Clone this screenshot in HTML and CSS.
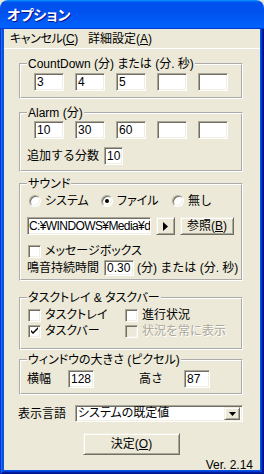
FILE: index.html
```html
<!DOCTYPE html>
<html lang="ja">
<head>
<meta charset="utf-8">
<link rel="stylesheet" href="styles.css">
</head>
<body>
<div class="window">
  <div class="titlebar"><span class="title">オプション</span></div>
  <div class="frame">
    <div class="menubar">
      <span class="menu m1">キャンセル(<u>C</u>)</span>
      <span class="menu m2">詳細設定(<u>A</u>)</span>
    </div>
    <div class="client">
      <fieldset class="group g1">
        <legend>CountDown (分) または (分. 秒)</legend>
        <div class="gbody b1">
          <div class="row fields">
            <div class="tb w30">3</div><div class="tb w30">4</div><div class="tb w30">5</div><div class="tb w30"></div><div class="tb w30"></div>
          </div>
        </div>
      </fieldset>

      <fieldset class="group g2">
        <legend>Alarm (分)</legend>
        <div class="gbody b2">
          <div class="row fields">
            <div class="tb w30">10</div><div class="tb w30">30</div><div class="tb w30">60</div><div class="tb w30"></div><div class="tb w30"></div>
          </div>
          <div class="row add">
            <span class="lbl l-add">追加する分数</span><div class="tb w19">10</div>
          </div>
        </div>
      </fieldset>

      <fieldset class="group g3">
        <legend>サウンド</legend>
        <div class="gbody b3">
          <div class="row radios">
            <span class="ritem r1"><span class="radio"></span><span class="kana">システム</span></span>
            <span class="ritem r2"><span class="radio on"></span><span class="kana">ファイル</span></span>
            <span class="ritem r3"><span class="radio"></span><span>無し</span></span>
          </div>
          <div class="row path">
            <div class="tb wpath">C:¥WINDOWS¥Media¥d</div>
            <div class="btn barrow"><svg width="5" height="9" viewBox="0 0 5 9"><polygon points="0,0 5,4.5 0,9" fill="#000"/></svg></div>
            <div class="btn bref">参照(<u>B</u>)</div>
          </div>
          <div class="row msg">
            <span class="cb"></span><span class="kana cbl">メッセージボックス</span>
          </div>
          <div class="row dur">
            <span class="lbl l-dur">鳴音持続時間</span><div class="tb w30 short">0.30</div><span class="after">(分) または (分. 秒)</span>
          </div>
        </div>
      </fieldset>

      <fieldset class="group g4">
        <legend>タスクトレイ &amp; タスクバー</legend>
        <div class="gbody b4">
          <div class="row chk">
            <span class="citem c1"><span class="cb"></span><span class="kana cbl">タスクトレイ</span></span>
            <span class="citem"><span class="cb"></span><span class="cbl">進行状況</span></span>
          </div>
          <div class="row chk chk2">
            <span class="citem c1"><span class="cb"><svg width="13" height="13" viewBox="0 0 13 13"><path d="M3 5v2l2 2 5-5V2L5 7z" fill="#000"/></svg></span><span class="kana cbl">タスクバー</span></span>
            <span class="citem"><span class="cb dis"></span><span class="cbl distext">状況を常に表示</span></span>
          </div>
        </div>
      </fieldset>

      <fieldset class="group g5">
        <legend>ウィンドウの大きさ (ピクセル)</legend>
        <div class="gbody b5">
          <div class="row size">
            <span class="lbl l-w">横幅</span><div class="tb w26">128</div>
            <span class="lbl l-h">高さ</span><div class="tb w26">87</div>
          </div>
        </div>
      </fieldset>

      <div class="row lang">
        <span class="lbl l-lang">表示言語</span>
        <div class="combo">
          <span class="ctext kana">システムの既定値</span>
          <div class="btn cdrop"><svg width="7" height="4" viewBox="0 0 7 4"><polygon points="0,0 7,0 3.5,4" fill="#000"/></svg></div>
        </div>
      </div>

      <div class="row okrow">
        <div class="btn bok">決定(<u>O</u>)</div>
      </div>

      <div class="ver">Ver. 2.14</div>
    </div>
  </div>
</div>
</body>
</html>
```
FILE: styles.css
```css
* { box-sizing: border-box; }
body {
  margin: 0;
  font-family: "Liberation Sans", "Noto Sans CJK JP", sans-serif;
  font-size: 12px;
  line-height: 14px;
  color: #000;
  background: #ECE9D8;
}
.window {
  width: 264px;
  height: 474px;
  display: flex;
  flex-direction: column;
  overflow: hidden;
}
.titlebar {
  height: 29px;
  flex: none;
  border-radius: 8px 8px 0 0;
  background: linear-gradient(180deg, #0997ff 0%, #0053ee 8%, #0050ee 40%, #0060fb 88%, #0066ff 93%, #005bff 95%, #003dd7 97%, #003dd7 100%);
  display: flex;
  align-items: center;
  padding-left: 7px;
}
.title {
  color: #fff;
  font-family: "Noto Sans CJK JP", sans-serif;
  font-weight: bold;
  font-size: 14px;
  line-height: 15px;
  text-shadow: 1px 1px #0f1089;
  font-feature-settings: "palt";
}
.frame {
  flex: 1;
  min-height: 0;
  display: flex;
  flex-direction: column;
  padding: 0 4px 4px;
  background: #0855dd;
  box-shadow: inset 1px 0 #0831d9, inset -1px 0 #00138c, inset 0 -1px #00138c,
              inset 2px 0 #166aee, inset -2px 0 #001ea0, inset 0 -2px #001ea0,
              inset 3px 0 #0855dd, inset -3px 0 #003bda, inset 0 -3px #003bda;
}
.menubar {
  height: 20px;
  flex: none;
  background: #ECE9D8;
  border-bottom: 1px solid #fff;
  display: flex;
  align-items: center;
}
.menu {
  line-height: 16px;
  font-feature-settings: "palt";
  white-space: nowrap;
}
.m1 { margin-left: 6px; width: 78px; letter-spacing: -0.4px; }
.kana { font-feature-settings: "palt"; }
.client {
  flex: 1;
  min-height: 0;
  background: #ECE9D8;
  display: flex;
  flex-direction: column;
  padding: 9px 17px 0 15px;
}
.group {
  margin: 0;
  padding: 0;
  min-width: 0;
  border: 2px groove #fff;
  flex: none;
}
.group legend {
  margin-left: 6px;
  padding: 0 1px;
  font-size: 12px;
  line-height: 12px;
  height: 12px;
  font-feature-settings: "palt";
}
.row { display: flex; align-items: center; flex: none; }
.lbl { white-space: nowrap; flex: none; }
.tb {
  background: #fff;
  height: 18px;
  border: 1px solid;
  border-color: #ACA899 #fff #fff #ACA899;
  box-shadow: inset 1px 1px #716F64, inset -1px -1px #F1EFE2;
  padding-left: 2px;
  line-height: 16px;
  white-space: nowrap;
  overflow: hidden;
  flex: none;
}
.w30 { width: 30px; }
.w19 { width: 19px; }
.w26 { width: 26px; }
.wpath { width: 124px; letter-spacing: -0.6px; padding-left: 1px; }
.short { height: 16px; line-height: 14px; }
.btn {
  background: #ECE9D8;
  border: 1px solid;
  border-color: #F1EFE2 #716F64 #716F64 #F1EFE2;
  box-shadow: inset 1px 1px #fff, inset -1px -1px #ACA899;
  display: flex;
  align-items: center;
  justify-content: center;
  flex: none;
}
.b1 { padding: 3px 0 6px 13px; }
.fields { gap: 11px; height: 18px; }
.g2 { margin-top: 8px; }
.b2 { padding: 2px 0 5px 13px; }
.add { margin-top: 8px; margin-left: -7px; height: 18px; }
.l-add { width: 77px; }
.g3 { margin-top: 6px; }
.b3 { padding: 4px 0 3px 6px; }
.radios { height: 14px; margin-left: 2px; }
.ritem { display: flex; align-items: center; flex: none; }
.r1 { width: 72px; }
.r2 { width: 71px; }
.radio {
  width: 12px;
  height: 12px;
  border-radius: 50%;
  background: #fff;
  border: 1px solid;
  border-color: #ACA899 #fff #fff #ACA899;
  box-shadow: inset 1px 1px #716F64, inset -1px -1px #F1EFE2;
  margin-right: 4px;
  display: flex;
  align-items: center;
  justify-content: center;
  flex: none;
}
.radio.on::after {
  content: "";
  width: 4px;
  height: 4px;
  border-radius: 50%;
  background: #000;
}
.path { margin-top: 9px; height: 18px; }
.barrow { width: 19px; height: 18px; margin-left: 5px; }
.bref { width: 54px; height: 18px; margin-left: 5px; line-height: 14px; }
.msg { margin-top: 10px; height: 13px; margin-left: 1px; }
.cb {
  width: 13px;
  height: 13px;
  background: #fff;
  border: 1px solid;
  border-color: #ACA899 #fff #fff #ACA899;
  box-shadow: inset 1px 1px #716F64, inset -1px -1px #F1EFE2;
  flex: none;
  position: relative;
}
.cb svg { position: absolute; left: -1px; top: -1px; }
.cb.dis { background: #ECE9D8; }
.cbl { margin-left: 4px; line-height: 13px; white-space: nowrap; }
.distext { color: #ACA899; text-shadow: 1px 1px #fff; }
.dur { margin-top: 2px; height: 16px; }
.l-dur { width: 77px; }
.after { margin-left: 3px; white-space: nowrap; }
.g4 { margin-top: 11px; }
.b4 { padding: 5px 0 10px 7px; }
.chk { height: 13px; }
.chk2 { margin-top: 3px; }
.citem { display: flex; align-items: center; }
.c1 { width: 97px; }
.g5 { margin-top: 4px; }
.b5 { padding: 4px 0 5px 6px; }
.size { height: 18px; }
.l-w { width: 41px; }
.l-h { width: 45px; margin-left: 45px; }
.lang { margin-top: 10px; margin-left: -1px; height: 17px; }
.l-lang { width: 57px; }
.combo {
  width: 168px;
  height: 17px;
  background: #fff;
  border: 1px solid;
  border-color: #ACA899 #fff #fff #ACA899;
  box-shadow: inset 1px 1px #716F64, inset -1px -1px #F1EFE2;
  display: flex;
  align-items: center;
  padding: 2px 2px 2px 2px;
}
.ctext { flex: 1; line-height: 13px; white-space: nowrap; }
.cdrop { width: 16px; height: 13px; }
.okrow { margin-top: 11px; height: 22px; }
.bok { width: 97px; height: 22px; margin-left: 64px; }
.ver { margin-top: 4px; text-align: right; margin-right: -10px; line-height: 12px; flex: none; }
u { text-decoration-thickness: 1px; text-underline-offset: 1px; }
```
